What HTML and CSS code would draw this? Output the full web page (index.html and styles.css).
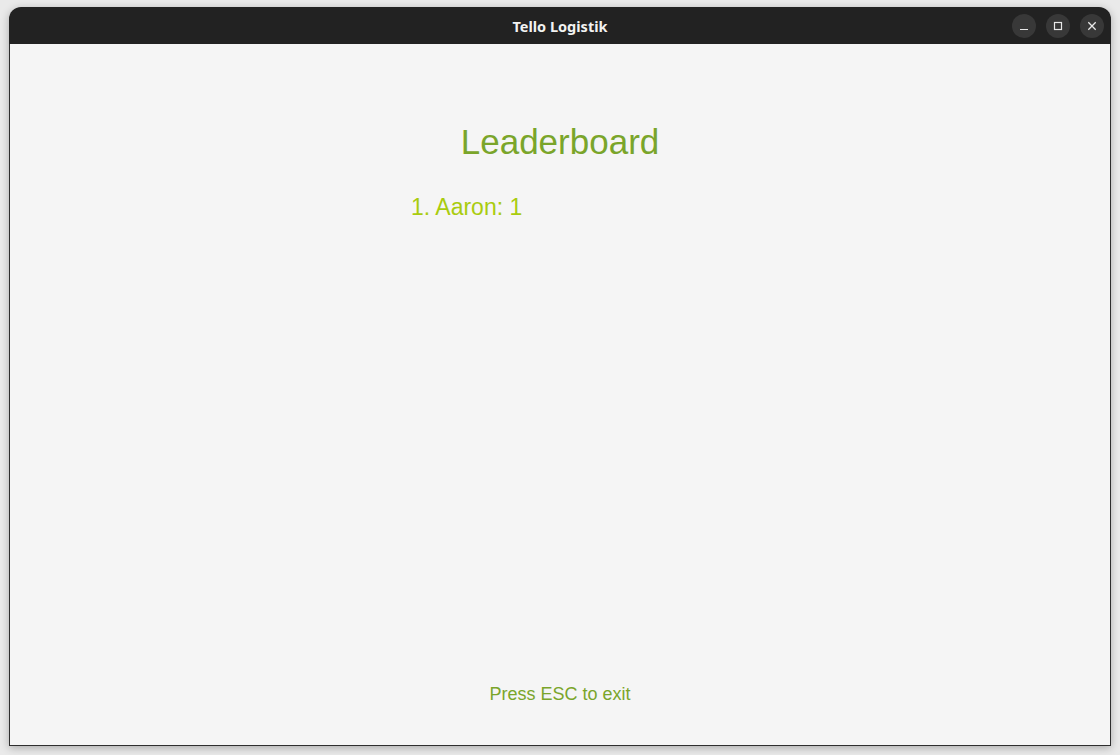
FILE: index.html
```html
<!DOCTYPE html>
<html lang="de">
<head>
<meta charset="utf-8">
<title>Tello Logistik</title>
<link rel="stylesheet" href="styles.css">
</head>
<body>
<div class="window">
  <header class="titlebar">
    <span class="title">Tello Logistik</span>
    <div class="controls">
      <span class="btn"><svg width="10" height="10" viewBox="0 0 10 10"><path d="M1 8.5h8" stroke="#e8e8e8" stroke-width="1.2" fill="none"/></svg></span>
      <span class="btn"><svg width="10" height="10" viewBox="0 0 10 10"><rect x="1.5" y="1.5" width="7" height="7" stroke="#e8e8e8" stroke-width="1.2" fill="none"/></svg></span>
      <span class="btn"><svg width="10" height="10" viewBox="0 0 10 10"><path d="M1.3 1.3l7.4 7.4M8.7 1.3l-7.4 7.4" stroke="#e8e8e8" stroke-width="1.3" fill="none"/></svg></span>
    </div>
  </header>
  <main class="content">
    <h1 class="heading">Leaderboard</h1>
    <ol class="board">
      <li class="entry">1. Aaron: 1</li>
    </ol>
    <p class="hint">Press ESC to exit</p>
  </main>
</div>
</body>
</html>
```
FILE: styles.css
```css
html, body {
  margin: 0;
  padding: 0;
}
body {
  background: #eaeaea;
  padding: 7px 9px 0 9px;
  height: 755px;
  box-sizing: border-box;
  overflow: hidden;
}
.window {
  width: 1102px;
  height: 739px;
  display: flex;
  flex-direction: column;
  border-radius: 12px 12px 0 0;
  box-shadow: 0 2px 9px rgba(0, 0, 0, 0.28);
  overflow: hidden;
}
.titlebar {
  height: 37px;
  flex: none;
  background: #222222;
  display: flex;
  align-items: center;
  justify-content: center;
  position: relative;
}
.title {
  color: #f2f2f2;
  font-family: "Noto Sans", "DejaVu Sans", sans-serif;
  font-weight: 700;
  font-size: 14.5px;
  margin-top: 1px;
}
.controls {
  position: absolute;
  right: 7px;
  top: 7px;
  display: flex;
  gap: 10px;
}
.btn {
  width: 24px;
  height: 24px;
  border-radius: 50%;
  background: #383838;
  display: flex;
  align-items: center;
  justify-content: center;
}
.content {
  flex: 1;
  background: #f5f5f5;
  border: 1px solid #2e2e2e;
  border-top: none;
  display: flex;
  flex-direction: column;
  font-family: "Liberation Sans", Arial, sans-serif;
}
.heading {
  margin: 78px 0 0 0;
  font-size: 35px;
  line-height: 40px;
  font-weight: 400;
  color: #7aa52a;
  text-align: center;
}
.board {
  list-style: none;
  margin: 32px 0 0 0;
  padding: 0 0 0 401px;
}
.entry {
  font-size: 23px;
  line-height: 26px;
  color: #a9cc0e;
}
.hint {
  margin: auto 0 40px 0;
  font-size: 18px;
  line-height: 22px;
  color: #7aa52a;
  text-align: center;
}
```
